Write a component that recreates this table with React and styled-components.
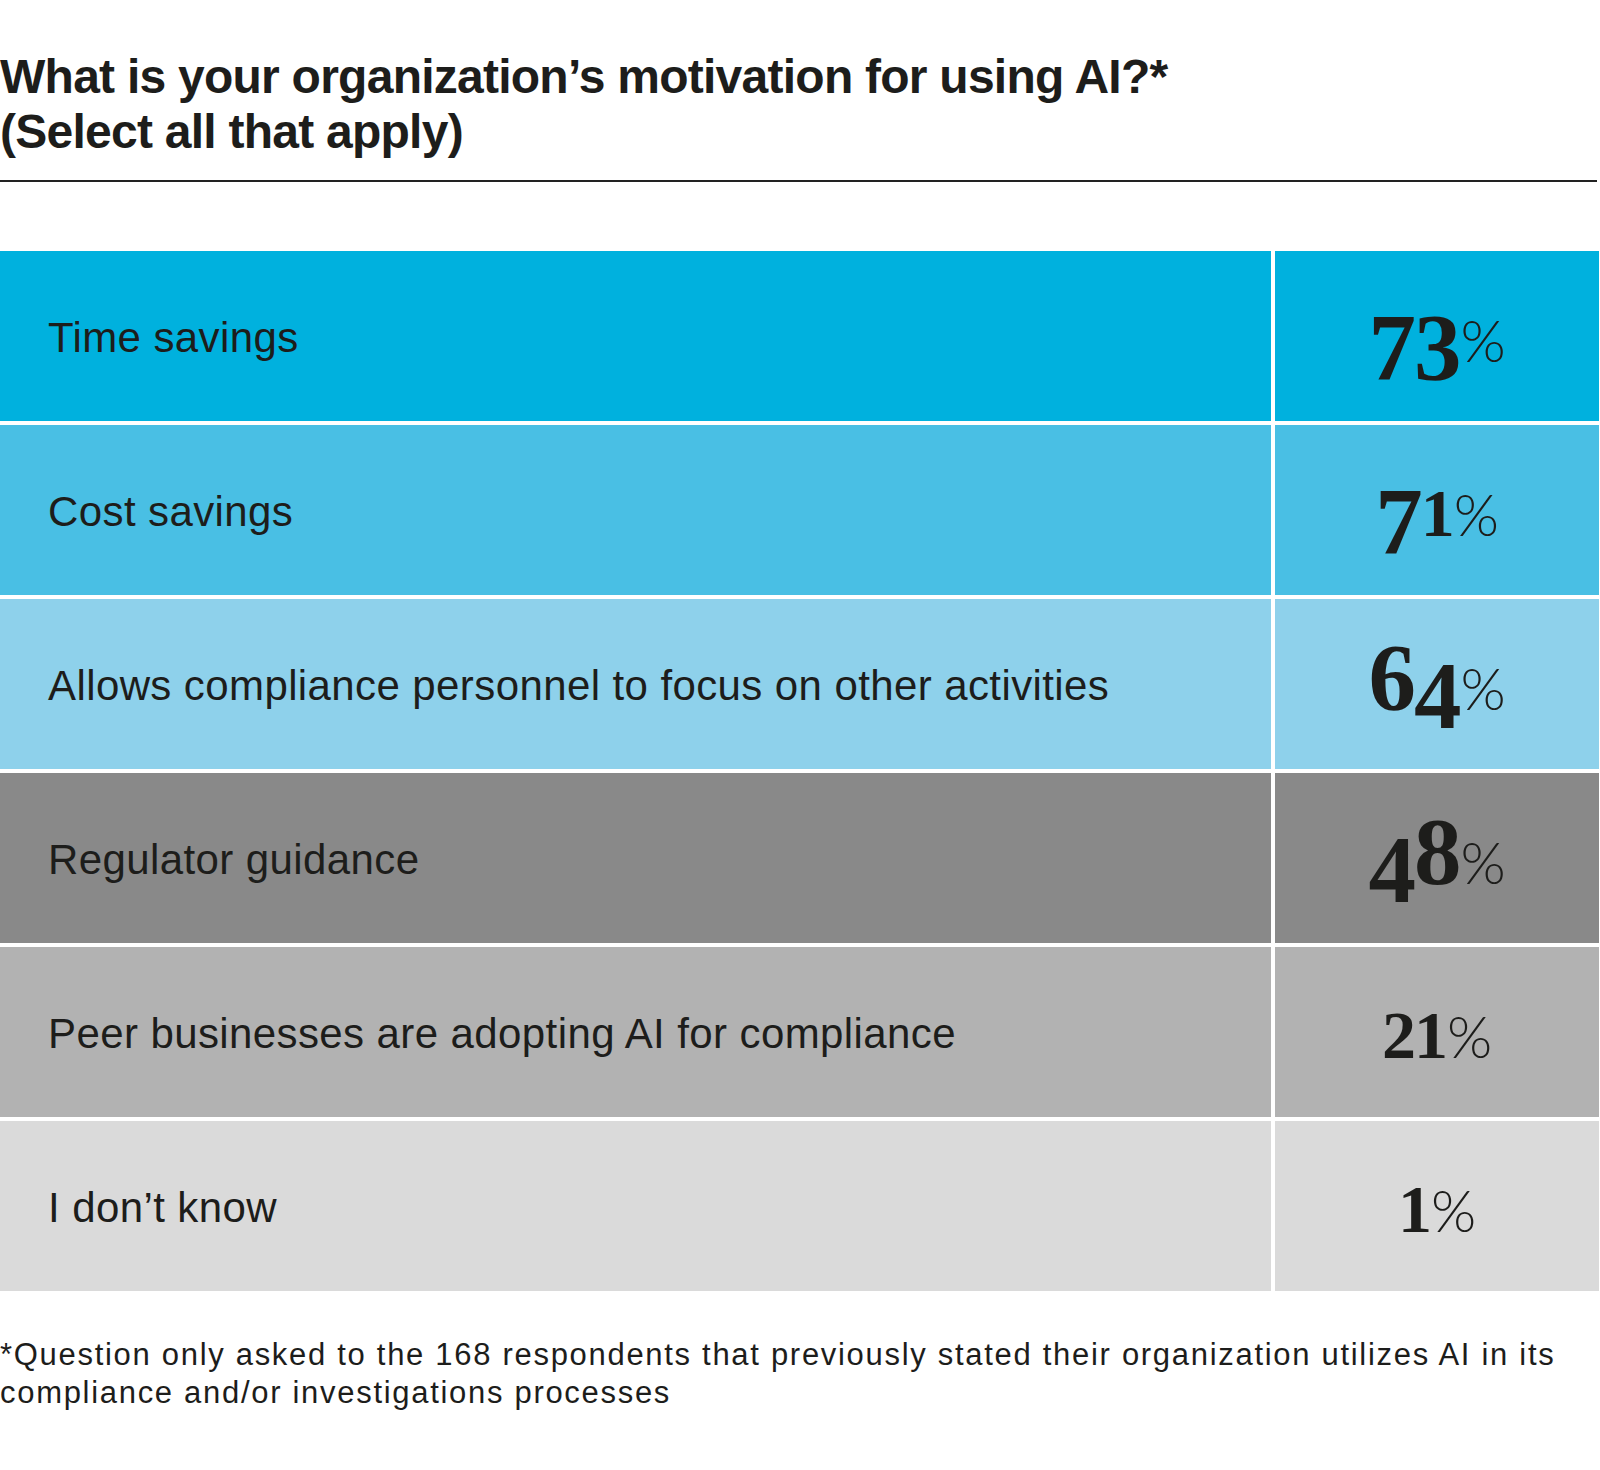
import styled, { createGlobalStyle } from 'styled-components';

const GlobalStyle = createGlobalStyle`
	html, body {
		margin: 0;
		padding: 0;
		background: #ffffff;
	}
	body {
		font-family: "Liberation Sans", Arial, sans-serif;
		color: #1d1d1b;
	}
`

const Page = styled.div`
	width: 1600px;
	padding-top: 49px;
	padding-bottom: 60px;
`

const Title = styled.h1`
	margin: 0;
	font-family: "Liberation Sans", Arial, sans-serif;
	font-weight: 700;
	font-size: 48px;
	line-height: 55px;
	letter-spacing: -0.75px;
	color: #1d1d1b;
`

const Rule = styled.hr`
	width: 1597px;
	height: 2px;
	margin: 21px 0 69px 0;
	border: 0;
	background: #222222;
`

const Table = styled.div`
	display: grid;
	grid-template-columns: 1271px 324px;
	grid-auto-rows: 170px;
	column-gap: 4px;
	row-gap: 4px;
	width: 1599px;
`

const LabelCell = styled.div`
	display: flex;
	align-items: center;
	padding-left: 48px;
	padding-top: 4px;
	background: ${props => props.$bg};
	font-size: 42px;
	letter-spacing: 0.4px;
	color: #1d1d1b;
`

const NumberCell = styled.div`
	display: flex;
	align-items: center;
	justify-content: center;
	padding-bottom: 12px;
	background: ${props => props.$bg};
	color: #1d1d1b;
`

const Figure = styled.div`
	font-family: "Liberation Serif", "Times New Roman", serif;
	font-weight: 700;
	font-size: 95px;
	line-height: 100px;
	height: 100px;
	letter-spacing: -2px;
	white-space: nowrap;
`

const Digit = styled.span`
	display: inline-block;
	line-height: 0;
	font-size: ${props => (props.$kind === 'x' ? '68px' : '95px')};
	transform: ${props => (props.$kind === 'desc' ? 'translateY(18px)' : 'none')};
`

const Percent = styled.span`
	display: inline-block;
	line-height: 0;
	margin-left: 1px;
	font-family: Lato, "Liberation Sans", sans-serif;
	font-weight: 300;
	font-size: 58px;
	letter-spacing: 0;
`

const Footnote = styled.p`
	margin: 45px 0 0 0;
	font-size: 31px;
	line-height: 38px;
	letter-spacing: 1.7px;
	color: #1d1d1b;
`

const rows = [
	{ label: 'Time savings', value: '73', bg: '#00b1de' },
	{ label: 'Cost savings', value: '71', bg: '#49bfe4' },
	{ label: 'Allows compliance personnel to focus on other activities', value: '64', bg: '#8ed1eb' },
	{ label: 'Regulator guidance', value: '48', bg: '#898989' },
	{ label: 'Peer businesses are adopting AI for compliance', value: '21', bg: '#b2b2b2' },
	{ label: 'I don’t know', value: '1', bg: '#dadada' },
];

// old-style figures: 0 1 2 sit on x-height, 6 8 rise, the rest drop below the baseline
const digitKind = (d) => {
	if ('012'.includes(d)) return 'x';
	if ('68'.includes(d)) return 'asc';
	return 'desc';
};

function Value({ value }) {
	return (
		<Figure>
			{value.split('').map((d, i) => (
				<Digit key={i} $kind={digitKind(d)}>{d}</Digit>
			))}
			<Percent>%</Percent>
		</Figure>
	);
}

function App() {
	return (
		<Page>
			<GlobalStyle />
			<Title>
				What is your organization’s motivation for using AI?*
				<br />
				(Select all that apply)
			</Title>
			<Rule />
			<Table>
				{rows.map(row => (
					<>
						<LabelCell key={row.label + '-l'} $bg={row.bg}>{row.label}</LabelCell>
						<NumberCell key={row.label + '-n'} $bg={row.bg}>
							<Value value={row.value} />
						</NumberCell>
					</>
				))}
			</Table>
			<Footnote>
				*Question only asked to the 168 respondents that previously stated their organization utilizes AI in its
				<br />
				compliance and/or investigations processes
			</Footnote>
		</Page>
	);
}

export default App;
